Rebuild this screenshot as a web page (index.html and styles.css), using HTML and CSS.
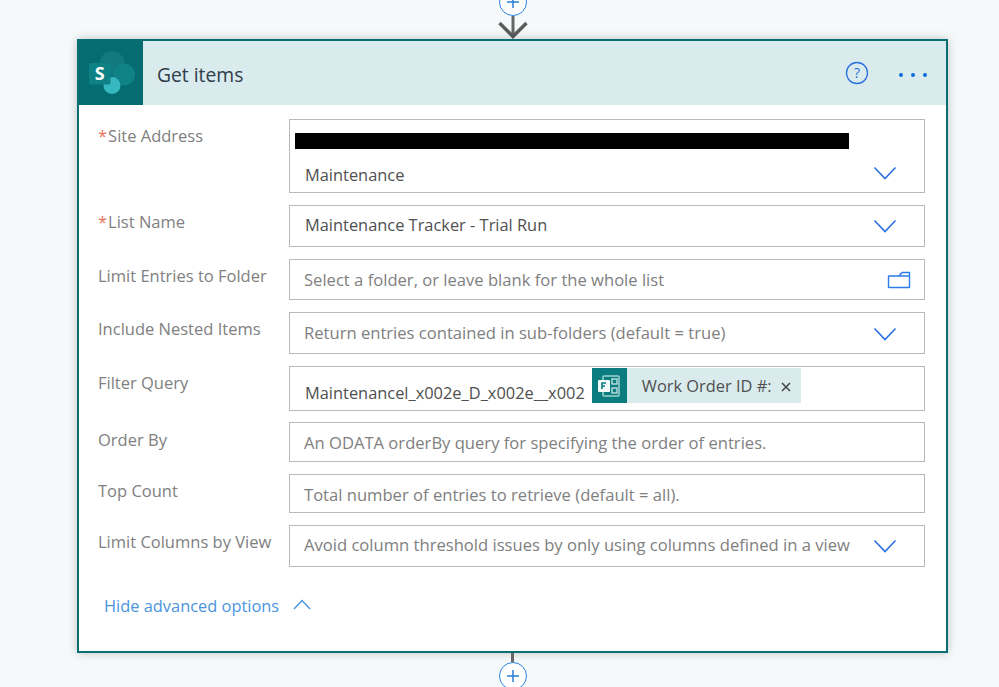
FILE: index.html
```html
<!DOCTYPE html>
<html lang="en">
  <head>
    <meta charset="UTF-8" />
    <meta name="viewport" content="width=device-width, initial-scale=1.0" />
    <title>Get items</title>
    <link rel="stylesheet" href="styles.css">
  </head>
  <body>
    <div class="flow">
      <div class="plus plus-top">
        <svg width="14" height="14" viewBox="0 0 14 14"><path d="M7 1v12M1 7h12" /></svg>
      </div>
      <svg class="arrow" width="30" height="23" viewBox="0 0 30 23">
        <path class="arrow-stem" d="M15 0v20" />
        <path class="arrow-head" d="M1.500 7L15 20.500 28.500 7" />
      </svg>

      <div class="card">
        <div class="card-header">
          <div class="logo-box">
            <svg width="64" height="64" viewBox="0 0 64 64">
              <circle cx="33" cy="22.500" r="12.500" fill="#127a7e" />
              <circle cx="45" cy="33.500" r="11" fill="#0f8286" />
              <circle cx="33" cy="44.500" r="8.500" fill="#35b8bf" />
              <rect x="10" y="22" width="21.500" height="21.500" rx="1.500" fill="#0e8184" />
              <text x="20.700" y="39" class="logo-letter">S</text>
            </svg>
          </div>
          <div class="card-title">Get items</div>
          <svg class="help" width="24" height="24" viewBox="0 0 24 24">
            <circle cx="12" cy="12" r="10.500" />
            <text x="12" y="17" class="help-mark">?</text>
          </svg>
          <div class="dots"><span></span><span></span><span></span></div>
        </div>

        <div class="card-body">
          <div class="row">
            <label class="label required">Site Address</label>
            <div class="field field-site">
              <div class="redacted"></div>
              <span class="value">Maintenance</span>
              <svg class="chevron chevron-site" width="24" height="14" viewBox="0 0 24 14"><path d="M1.500 1.500L12 12.500 22.500 1.500" /></svg>
            </div>
          </div>
          <div class="row">
            <label class="label required">List Name</label>
            <div class="field h42">
              <span class="value">Maintenance Tracker - Trial Run</span>
              <svg class="chevron" width="24" height="14" viewBox="0 0 24 14"><path d="M1.500 1.500L12 12.500 22.500 1.500" /></svg>
            </div>
          </div>
          <div class="row">
            <label class="label">Limit Entries to Folder</label>
            <div class="field h41">
              <span class="hint">Select a folder, or leave blank for the whole list</span>
              <svg class="folder" width="24" height="18" viewBox="0 0 24 18"><path d="M2 5h10l3-3.500h7.500V16a.5.5 0 0 1-.5.5H2a.5.5 0 0 1-.5-.5V5.500a.5.5 0 0 1 .5-.5zM12 5h10.500" /></svg>
            </div>
          </div>
          <div class="row">
            <label class="label">Include Nested Items</label>
            <div class="field h42 field-low">
              <span class="hint">Return entries contained in sub-folders (default = true)</span>
              <svg class="chevron" width="24" height="14" viewBox="0 0 24 14"><path d="M1.500 1.500L12 12.500 22.500 1.500" /></svg>
            </div>
          </div>
          <div class="row row-tight">
            <label class="label">Filter Query</label>
            <div class="field field-filter">
              <span class="value">Maintenancel_x002e_D_x002e__x002</span>
              <div class="token">
                <div class="token-icon">
                  <svg width="24" height="24" viewBox="0 0 24 24">
                    <rect x="6" y="2" width="16" height="20" rx="1" fill="none" stroke="#9fd3d2" stroke-width="1.500" />
                    <rect x="15" y="5" width="5" height="5" fill="none" stroke="#cfe9e8" stroke-width="1.300" />
                    <rect x="15" y="14" width="5" height="5" fill="none" stroke="#cfe9e8" stroke-width="1.300" />
                    <rect x="1" y="6" width="12" height="12" rx="1" fill="#f2fafa" />
                    <path d="M5 15V9h4M5 12h3" fill="none" stroke="#0b7d80" stroke-width="1.600" />
                  </svg>
                </div>
                <span class="token-text">Work Order ID #:</span>
                <svg class="token-close" width="10" height="10" viewBox="0 0 10 10"><path d="M1 1l8 8M9 1l-8 8" /></svg>
              </div>
            </div>
          </div>
          <div class="row">
            <label class="label label-low">Order By</label>
            <div class="field h40 field-lower">
              <span class="hint">An ODATA orderBy query for specifying the order of entries.</span>
            </div>
          </div>
          <div class="row">
            <label class="label">Top Count</label>
            <div class="field h39 field-lower">
              <span class="hint">Total number of entries to retrieve (default = all).</span>
            </div>
          </div>
          <div class="row">
            <label class="label">Limit Columns by View</label>
            <div class="field h42">
              <span class="hint">Avoid column threshold issues by only using columns defined in a view</span>
              <svg class="chevron" width="24" height="14" viewBox="0 0 24 14"><path d="M1.500 1.500L12 12.500 22.500 1.500" /></svg>
            </div>
          </div>
          <div class="advanced">
            <span>Hide advanced options</span>
            <svg width="18" height="11" viewBox="0 0 18 11"><path d="M1 10l8-8.500 8 8.500" /></svg>
          </div>
        </div>
      </div>

      <div class="stem"></div>
      <div class="plus">
        <svg width="14" height="14" viewBox="0 0 14 14"><path d="M7 1v12M1 7h12" /></svg>
      </div>
    </div>
  </body>
</html>
```

FILE: styles.css
```css
html,
body {
  height: 687px;
  overflow: hidden;
}

body {
  margin: 0;
  background: #f6f9f9;
  font-family: "Open Sans", "Noto Sans", sans-serif;
  font-size: 16.4px;
}

.flow {
  width: 871px;
  margin-left: 77px;
  display: flex;
  flex-direction: column;
  align-items: center;
}

.plus {
  width: 28px;
  height: 28px;
  box-sizing: border-box;
  flex-shrink: 0;
  border: 1.5px solid #2a84e0;
  border-radius: 50%;
  background: #fff;
  display: flex;
  align-items: center;
  justify-content: center;
}

.plus path {
  fill: none;
  stroke: #2a7fd8;
  stroke-width: 1.5;
}

.plus-top {
  margin-top: -12px;
}

.arrow {
  display: block;
  flex-shrink: 0;
}

.arrow-stem {
  fill: none;
  stroke: #666;
  stroke-width: 3;
}

.arrow-head {
  fill: none;
  stroke: #5c5c5c;
  stroke-width: 3.5;
}

.stem {
  width: 3px;
  height: 9px;
  background: #666;
  flex-shrink: 0;
}

.card {
  width: 100%;
  box-sizing: border-box;
  border: 2px solid #0b6e72;
  background: #fff;
  box-shadow: 0 0 9px rgba(0, 0, 0, 0.22);
}

.card-header {
  height: 64px;
  display: flex;
  align-items: center;
  background: #d9ebed;
}

.logo-box {
  width: 64px;
  height: 64px;
  background: #056d71;
}

.logo-box svg {
  display: block;
}

.logo-letter {
  font-family: "Open Sans", sans-serif;
  font-size: 18px;
  font-weight: 700;
  fill: #fff;
  text-anchor: middle;
}

.card-title {
  flex-grow: 1;
  margin: 3px 0 0 14px;
  font-size: 19.3px;
  color: #2f3d4c;
}

.help {
  margin-right: 30px;
}

.help circle {
  fill: none;
  stroke: #2b6fe0;
  stroke-width: 1.3;
}

.help-mark {
  font-size: 14px;
  fill: #2b6fe0;
  text-anchor: middle;
}

.dots {
  display: flex;
  gap: 8px;
  margin-right: 19px;
  margin-top: 4px;
}

.dots span {
  width: 4px;
  height: 4px;
  border-radius: 50%;
  background: #0f6cdc;
}

.card-body {
  padding: 14px 21px 35px 0;
}

.row {
  display: flex;
  margin-bottom: 12px;
}

.row-tight {
  margin-bottom: 11px;
}

.label {
  width: 210px;
  flex-shrink: 0;
  box-sizing: border-box;
  padding: 7px 0 0 19px;
  line-height: 20px;
  font-size: 16.5px;
  color: #808080;
}

.label-low {
  padding-top: 8px;
}

.required::before {
  content: "*";
  color: #e8705a;
  margin-right: 1px;
}

.field {
  flex-grow: 1;
  box-sizing: border-box;
  border: 1px solid #b9b9b9;
  padding: 0 27px 2px 14px;
  display: flex;
  align-items: center;
  justify-content: space-between;
}

.field-low {
  padding-bottom: 0;
}

.field-lower {
  padding-top: 2px;
  padding-bottom: 0;
}

.h39 {
  height: 39px;
}

.h40 {
  height: 40px;
}

.h41 {
  height: 41px;
  padding-bottom: 0;
}

.h42 {
  height: 42px;
}

.field-site {
  height: 74px;
  position: relative;
  align-items: flex-end;
  padding-bottom: 7px;
}

.redacted {
  position: absolute;
  left: 5px;
  top: 13px;
  width: 554px;
  height: 16px;
  background: #000;
}

.field-filter {
  height: 45px;
  align-items: flex-end;
  justify-content: flex-start;
  padding: 0 0 7px 14px;
}

.value {
  margin-left: 1px;
  color: #505050;
  line-height: 20px;
}

.hint {
  color: #808080;
  font-size: 16.6px;
  line-height: 20px;
}

.chevron {
  margin-top: 2px;
}

.chevron path {
  fill: none;
  stroke: #2b6fe0;
  stroke-width: 1.6;
}

.chevron-site {
  margin-bottom: 5px;
}

.folder {
  margin-right: -14px;
}

.folder path {
  fill: none;
  stroke: #2b7be8;
  stroke-width: 1.4;
}

.token {
  height: 35px;
  width: 209px;
  margin: 0 0 0 7px;
  align-self: flex-end;
  display: flex;
  align-items: center;
  background: #d9ebed;
}

.token-icon {
  width: 35px;
  height: 35px;
  background: #0b7d80;
  display: flex;
  align-items: center;
  justify-content: center;
}

.token-text {
  margin-left: 15px;
  color: #505050;
}

.token-close {
  margin-left: 9px;
  margin-top: 3px;
}

.token-close path {
  fill: none;
  stroke: #444;
  stroke-width: 1.5;
}

.advanced {
  margin: 29px 0 0 25px;
  display: flex;
  align-items: center;
  gap: 14px;
  line-height: 20px;
  color: #4a95de;
}

.advanced svg {
  margin-top: -3px;
}

.advanced path {
  fill: none;
  stroke: #4a95de;
  stroke-width: 1.4;
}
```
